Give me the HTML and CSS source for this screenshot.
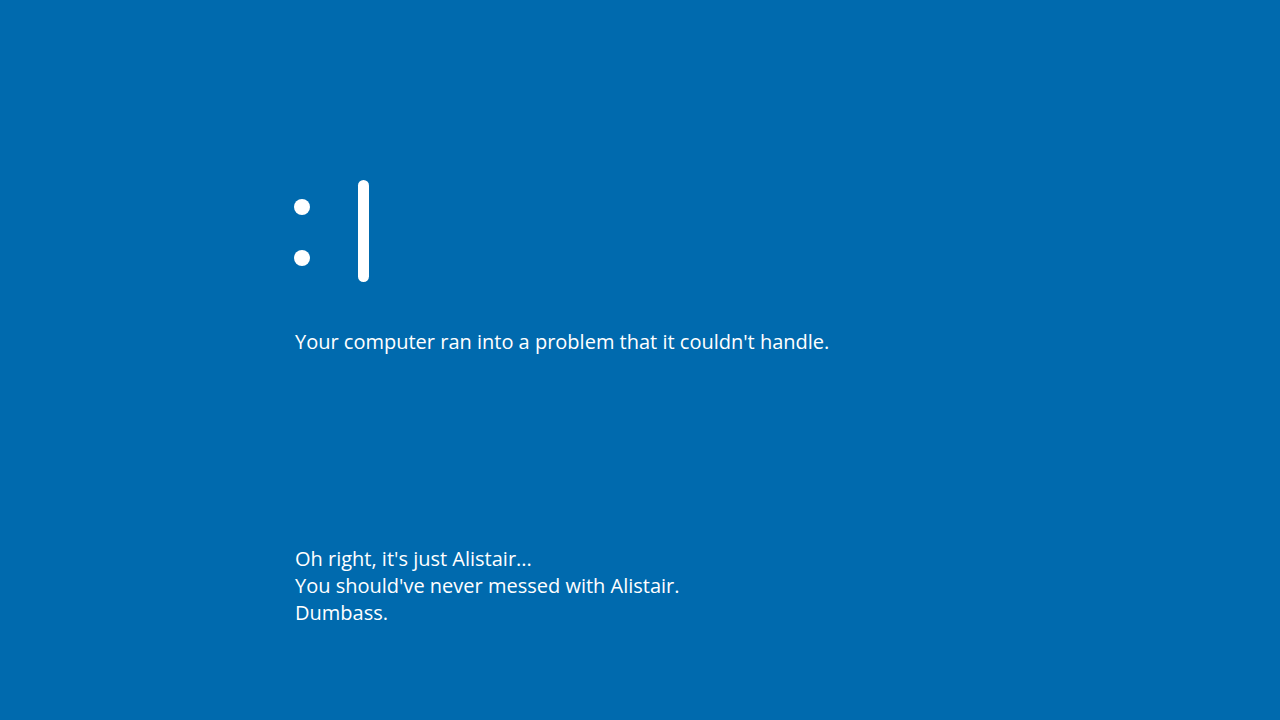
FILE: index.html
```html
<!DOCTYPE html>
<html lang="en">
<head>
<meta charset="utf-8">
<title>Problem</title>
<link rel="stylesheet" href="styles.css">
</head>
<body>
<main class="screen">
  <div class="face" aria-label=":|">
    <div class="eyes">
      <span class="dot"></span>
      <span class="dot"></span>
    </div>
    <span class="mouth"></span>
  </div>
  <p class="message">Your computer ran into a problem that it couldn't handle.</p>
  <div class="details">
    <p>Oh right, it's just Alistair...</p>
    <p>You should've never messed with Alistair.</p>
    <p>Dumbass.</p>
  </div>
</main>
</body>
</html>
```
FILE: styles.css
```css
html, body {
  margin: 0;
  padding: 0;
  height: 100%;
}
body {
  background: #006AAE;
  color: #ffffff;
  font-family: "Open Sans", "Noto Sans", sans-serif;
  font-size: 20px;
}
.screen {
  display: flex;
  flex-direction: column;
  padding: 180px 0 0 294px;
}
.face {
  display: flex;
  align-items: flex-start;
  gap: 48px;
  height: 102px;
}
.eyes {
  display: flex;
  flex-direction: column;
  gap: 35px;
  padding-top: 19px;
}
.dot {
  width: 16px;
  height: 16px;
  border-radius: 50%;
  background: #fff;
}
.mouth {
  width: 11px;
  height: 102px;
  border-radius: 6px;
  background: #fff;
}
.message {
  margin: 46px 0 0 1px;
  line-height: 27px;
}
.details {
  margin: 190px 0 0 1px;
}
.details p {
  margin: 0;
  line-height: 27px;
}
```
